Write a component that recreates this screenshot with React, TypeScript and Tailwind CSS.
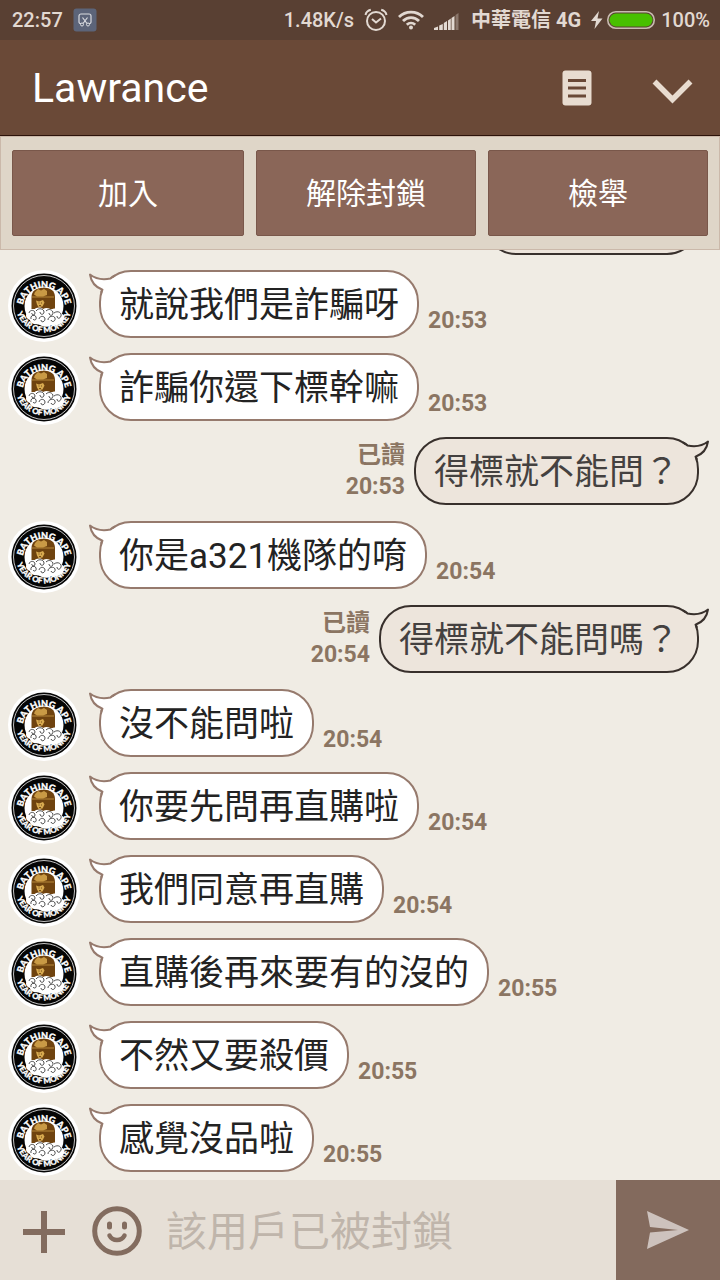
import { useId, useState } from "react";

interface Message {
  id: number;
  text: string;
  time: string;
  mine?: boolean;
}

const messages: Message[] = [
  { id: 1, text: "就說我們是詐騙呀", time: "20:53" },
  { id: 2, text: "詐騙你還下標幹嘛", time: "20:53" },
  { id: 3, text: "得標就不能問？", time: "20:53", mine: true },
  { id: 4, text: "你是a321機隊的唷", time: "20:54" },
  { id: 5, text: "得標就不能問嗎？", time: "20:54", mine: true },
  { id: 6, text: "沒不能問啦", time: "20:54" },
  { id: 7, text: "你要先問再直購啦", time: "20:54" },
  { id: 8, text: "我們同意再直購", time: "20:54" },
  { id: 9, text: "直購後再來要有的沒的", time: "20:55" },
  { id: 10, text: "不然又要殺價", time: "20:55" },
  { id: 11, text: "感覺沒品啦", time: "20:55" },
];

const actions = ["加入", "解除封鎖", "檢舉"];

function StatusBar() {
  return (
    <div className="flex h-10 shrink-0 items-center bg-[#594033] pr-2.5 pl-3 text-[20px] leading-6 font-medium whitespace-nowrap text-[#e2d9d2]">
      <span>22:57</span>
      <svg className="ml-2.5" width="24" height="24" viewBox="0 0 24 24" fill="none">
        <rect x="0.5" y="0.5" width="23" height="23" rx="3" fill="#5c6479" />
        <path
          d="M8 15.500H7.500a1.500 1.500 0 0 1-1.500-1.500V8a2 2 0 0 1 2-2h8a2 2 0 0 1 2 2v6a1.500 1.500 0 0 1-1.500 1.500H16M9.500 9.500l4.500 6M14.500 9.500l-4.500 6"
          stroke="#d9dbe0"
          strokeWidth="1.2"
        />
        <circle cx="9" cy="16.500" r="1.500" stroke="#d9dbe0" />
        <circle cx="15" cy="16.500" r="1.500" stroke="#d9dbe0" />
      </svg>
      <span className="ml-auto">1.48K/s</span>

      {/* alarm */}
      <svg className="ml-2.5" width="24" height="24" viewBox="0 0 24 24" fill="none" stroke="#e2d9d2" strokeWidth="2">
        <circle cx="12" cy="13" r="9" />
        <path d="M8 11l4 3.500 5-4" />
        <path d="M1.500 7C2 4.500 4 2.500 6.800 1.800M22.500 7c-.5-2.500-2.500-4.500-5.300-5.200" />
      </svg>

      {/* wifi */}
      <svg className="ml-2.5" width="26" height="20" viewBox="0 0 26 20" fill="none" stroke="#e2d9d2" strokeWidth="2.800">
        <path d="M1 7C7.500.4 18.500.4 25 7M5 11c4.500-4.600 11.500-4.600 16 0M8.800 14.800c2.500-2.300 5.900-2.300 8.400 0" />
        <circle cx="13" cy="17.500" r="2" fill="#e2d9d2" stroke="none" />
      </svg>

      {/* signal */}
      <svg className="mt-1 ml-2.5" width="25" height="18" viewBox="0 0 25 18" fill="#e2d9d2">
        <path d="M0 17v-2l4-1.500V17zM5.200 17v-4.500l3.600-1.500v6zM9.800 17v-7l3.200-2v9z" />
        <path d="M14 17V7.500l2.800-2V17zM17.500 17V5L20.500 3v14z" />
        <path d="M21.500 17V2L24.500 0v17z" fill="#8a766b" />
      </svg>

      <span className="ml-3 font-bold">中華電信 4G</span>

      {/* charging */}
      <svg className="ml-2.5" width="12" height="20" viewBox="0 0 12 20" fill="#e2d9d2">
        <path d="M8 1L0 11h5L3.500 19 11.500 8.500h-5z" />
      </svg>
      <svg className="ml-1" width="48" height="18" viewBox="0 0 48 18">
        <rect x="0.8" y="0.8" width="46.400" height="16.400" rx="8" fill="#594033" stroke="#c8bbb0" strokeWidth="1.600" />
        <rect x="2.500" y="2.500" width="43" height="13" rx="6.500" fill="#48c000" />
      </svg>
      <span className="ml-1.5">100%</span>
    </div>
  );
}

function Header() {
  return (
    <header className="flex h-24 shrink-0 items-center border-b border-[#2c130a] bg-[#6a4937] pr-6 pl-8">
      <h1 className="text-[41px] leading-12 text-white">Lawrance</h1>
      <button type="button" aria-label="Notes" className="ml-auto">
        <svg width="30" height="36" viewBox="0 0 30 36">
          <rect x="0.5" y="0.500" width="29" height="35" rx="3" fill="#e8dcd0" />
          <path d="M6 10.500h18M6 18h18M6 26h18" stroke="#6a4937" strokeWidth="3" />
        </svg>
      </button>
      <button type="button" aria-label="Expand menu" className="mt-1.5 ml-[58px]">
        <svg width="46" height="28" viewBox="0 0 46 28" fill="none">
          <path d="M4.500 4.500L22.500 22.500 40.500 4.500" stroke="#e8dcd0" strokeWidth="5.500" />
        </svg>
      </button>
    </header>
  );
}

function Avatar() {
  const id = useId();

  return (
    <svg className="-mb-1 shrink-0" width="72" height="72" viewBox="0 0 72 72">
      <defs>
        <path id={`${id}top`} d="M14.500 39A21.500 21.500 0 0 1 57.500 39" />
        <path id={`${id}bottom`} d="M7.500 34A28.500 28.500 0 0 0 64.500 34" />
      </defs>
      <circle cx="36" cy="36" r="36" fill="#fff" />
      <circle cx="36" cy="36" r="32.500" fill="#050505" />
      <circle cx="36" cy="36" r="30.500" fill="none" stroke="#f2f2f2" strokeWidth="0.8" />
      <circle cx="36" cy="36" r="19.500" fill="#fff" />
      {/* head */}
      <path d="M23.500 39V27c0-6 5-9.500 12-9.500S47 21 47 27v12z" fill="#6f430f" />
      <path d="M27 22l3-3 3 1.500 3-1.500 3 2v4l-4 1.500h-6l-3-2z" fill="#c99a45" />
      <path d="M24 27h22" stroke="#c99a45" strokeWidth="0.8" />
      <path d="M28 30.500l3 1 4-1.500 1.500 2.500-2 4-4 .5-1.500-2.500z" fill="#d9ab50" />
      <path d="M30.500 33h1M33 33h1M31 35.500h2" stroke="#5b350a" strokeWidth="0.8" />
      {/* cloud */}
      <path
        d="M19 43c1-4 5-5 7-3 2-3 7-3 9-1 3-2 7-1 8 1 4-3 9-1 9 3 5 1 6 6 2 9-3 3-7 3-10 3-5 3-10 2-13-1-5 1-9-1-9-4-4-1-5-5-3-7z"
        fill="#fff"
      />
      <path
        d="M21 43c1-4 6-3 6 0s-4 2-3 0M28 41c3-4 8-2 8 1s-4 3-4 0M38 41c3-3 7-1 7 2s-4 3-4 0M46 43c4-3 8 0 7 3s-4 3-4 0M23 49c-1-4 4-5 5-2s-2 4-3 2M31 49c1-4 6-3 6 0s-4 4-4 1M40 50c0-4 6-5 7-2s-3 5-4 2"
        fill="none"
        stroke="#222"
        strokeWidth="0.8"
      />
      <g
        fill="#fff"
        stroke="#fff"
        strokeWidth="0.3"
        fontWeight="900"
        fontFamily="Lato, sans-serif"
        textAnchor="middle"
      >
        <text fontSize="9">
          <textPath href={`#${id}top`} startOffset="50%">BATHING APE</textPath>
        </text>
        <text fontSize="8">
          <textPath href={`#${id}bottom`} startOffset="50%">YEAR OF MONKEY</textPath>
        </text>
      </g>
    </svg>
  );
}

function Tail({ mine }: { mine?: boolean }) {
  return (
    <svg
      className={
        mine
          ? "absolute -top-0.5 -right-[13px] -scale-x-100 fill-[#ede5dc] stroke-[#38302c]"
          : "absolute -top-0.5 -left-[13px] fill-white stroke-[#967a6d]"
      }
      width="30"
      height="26"
      viewBox="0 0 30 26"
    >
      <path d="M25 7.500C18 9.500 8 9.500 2 4.500c1 7 5 12.500 11.500 15.500l2 2 6-5 5-7z" stroke="none" />
      <path d="M27 5.500Q24 7 22.500 8.500C15 10 7 8.500 2 4.500c1 7 5 12.500 12.500 15.200q-1 1-1.500 3" fill="none" strokeWidth="2" strokeLinejoin="round" />
    </svg>
  );
}

function IncomingMessage({ message }: { message: Message }) {
  return (
    <li className="flex h-[68px] shrink-0 items-start pl-2">
      <Avatar />
      <div className="relative ml-[19px] flex h-[68px] items-center rounded-[32px] border-2 border-[#967a6d] bg-white px-[18px] pt-1 text-[35px] leading-10 whitespace-nowrap text-[#232323]">
        <Tail />
        {message.text}
      </div>
      <time className="ml-[9px] self-end pb-[3px] text-[23px] leading-7 font-bold text-[#8b7562]">{message.time}</time>
    </li>
  );
}

function OutgoingMessage({ message }: { message: Message }) {
  return (
    <li className="flex h-[70px] shrink-0 items-center justify-end pr-[21px]">
      <div className="mr-[9px] pt-0.5 text-right leading-8 font-bold text-[#8b7562]">
        <div className="text-[24px]">已讀</div>
        <time className="text-[23px]">{message.time}</time>
      </div>
      <div className="relative flex h-[68px] items-center rounded-[32px] border-2 border-[#38302c] bg-[#ede5dc] px-[18px] pt-1 text-[35px] leading-10 whitespace-nowrap text-[#444140]">
        <Tail mine />
        {message.text}
      </div>
    </li>
  );
}

export default function App() {
  const [draft, setDraft] = useState("");

  return (
    <div className="flex h-screen flex-col bg-[#f0ece4] font-[Roboto,'Noto_Sans_CJK_TC',sans-serif]">
      <StatusBar />
      <Header />

      <div className="grid shrink-0 grid-cols-[58fr_55fr_55fr] gap-3 border border-[#cbb9aa] bg-[#dfd6c8] px-[11px] py-[13px]">
        {actions.map((label) => (
          <button
            key={label}
            type="button"
            className="h-[86px] rounded-xs border border-[#79574a] bg-[#8a6658] pt-0.5 text-[30px] leading-10 text-white"
          >
            {label}
          </button>
        ))}
      </div>

      <main className="flex min-h-0 flex-1 flex-col justify-end overflow-hidden">
        <ul className="flex flex-col gap-[15px] pb-2">
          {/* older message scrolled under the action bar */}
          <li className="flex h-[70px] shrink-0 justify-end pr-[21px]">
            <div className="w-[215px] rounded-[32px] border-2 border-[#38302c] bg-[#ede5dc]" />
          </li>
          {messages.map((message) =>
            message.mine ? (
              <OutgoingMessage key={message.id} message={message} />
            ) : (
              <IncomingMessage key={message.id} message={message} />
            )
          )}
        </ul>
      </main>

      <form className="flex h-[100px] shrink-0 items-center bg-[#e6dfd6]" onSubmit={(e) => e.preventDefault()}>
        <button type="button" aria-label="Attach" className="ml-[22px] pt-1">
          <svg width="44" height="44" viewBox="0 0 44 44">
            <path d="M22 1v42M1 22h42" stroke="#836c5f" strokeWidth="6" />
          </svg>
        </button>
        <button type="button" aria-label="Stickers" className="ml-[26px] pt-0.5">
          <svg width="50" height="50" viewBox="0 0 50 50" fill="none" stroke="#836c5f" strokeWidth="5">
            <circle cx="25" cy="25" r="22.300" />
            <path d="M17.500 18v3M32.500 18v3" strokeLinecap="round" />
            <path d="M17.500 29.500c3 6 12 6 15 0" strokeWidth="4.500" strokeLinecap="round" />
          </svg>
        </button>
        <input
          type="text"
          aria-label="Message"
          value={draft}
          onChange={(e) => setDraft(e.target.value)}
          placeholder="該用戶已被封鎖"
          className="ml-6 h-full min-w-0 flex-1 bg-transparent pt-1 text-[41px] text-[#444140] outline-none placeholder:text-[#bfb5ab]"
        />
        <button
          type="submit"
          aria-label="Send"
          className="flex h-full w-[104px] items-center justify-center bg-[#836a5d]"
        >
          <svg width="44" height="40" viewBox="0 0 44 40" fill="#cdc2bd">
            <path d="M1 1l42 19L1 39l3-16.500L32 20 4 17z" />
          </svg>
        </button>
      </form>
    </div>
  );
}
